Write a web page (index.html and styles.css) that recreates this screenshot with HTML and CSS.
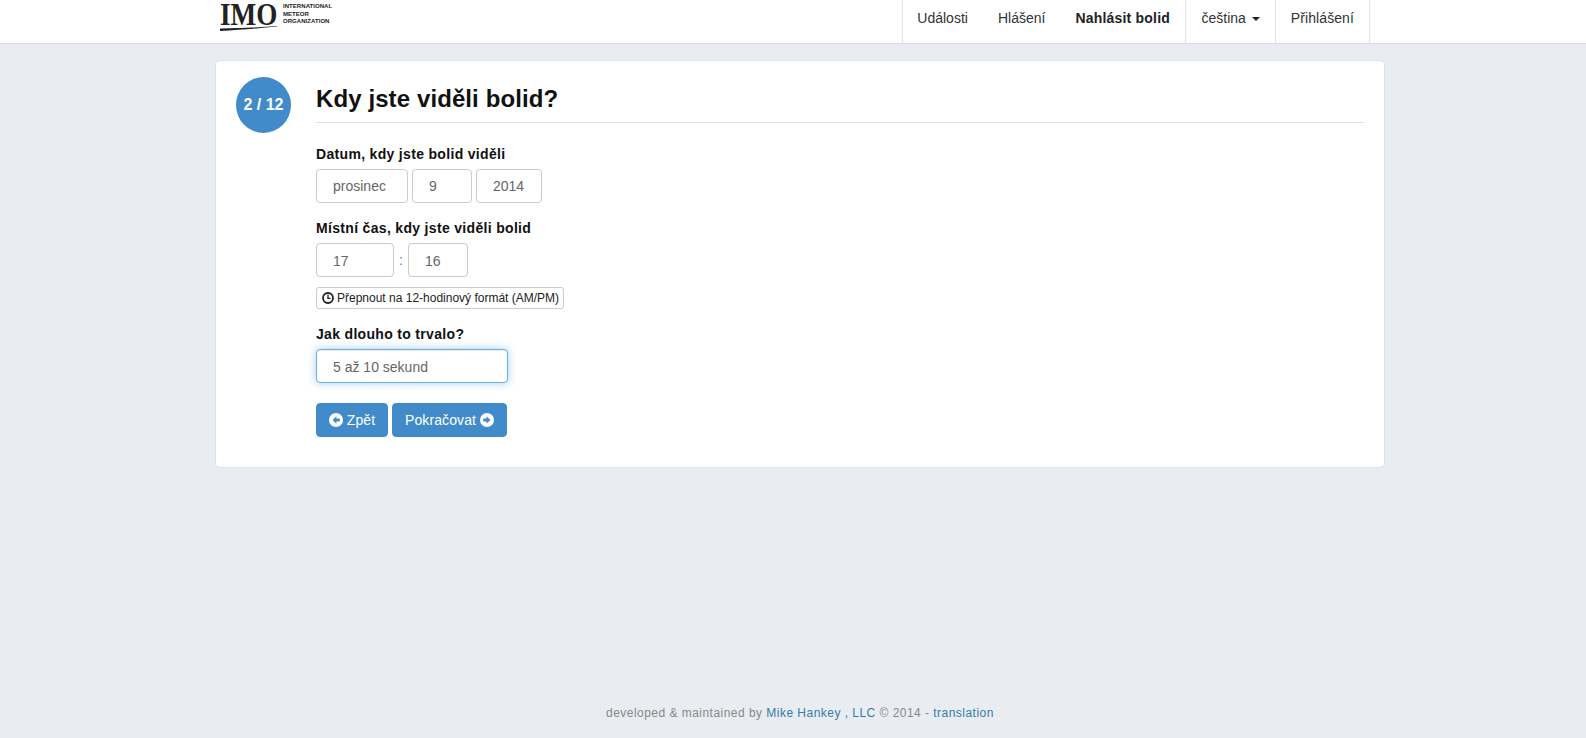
FILE: index.html
```html
<!DOCTYPE html>
<html lang="cs">
<head>
<meta charset="utf-8">
<title>Nahlásit bolid</title>
<link rel="stylesheet" href="styles.css">
</head>
<body>
<header class="navbar">
  <div class="navbar-inner">
    <a class="brand" href="#">
      <span class="brand-mark">IMO</span>
      <span class="brand-sub"><span>INTERNATIONAL</span><span>METEOR</span><span>ORGANIZATION</span></span>
      <svg class="brand-swoosh" viewBox="0 0 57 5" aria-hidden="true"><path d="M0 2.6 C20 2.4 40 1.2 57 0 L57 .6 C40 2.4 20 4 0 5Z" fill="#222"/></svg>
    </a>
    <nav class="nav">
      <a class="nav-item nav-first" href="#">Události</a>
      <a class="nav-item" href="#">Hlášení</a>
      <a class="nav-item nav-bold" href="#">Nahlásit bolid</a>
      <a class="nav-item nav-sep" href="#">čeština <span class="caret"></span></a>
      <a class="nav-item nav-sep nav-last" href="#">Přihlášení</a>
    </nav>
  </div>
</header>
<main class="card">
  <div class="step">2 / 12</div>
  <div class="content">
    <h1 class="title">Kdy jste viděli bolid?</h1>
    <div class="group g-date">
      <div class="label">Datum, kdy jste bolid viděli</div>
      <div class="row">
        <div class="field w-month">prosinec</div>
        <div class="field w-day">9</div>
        <div class="field w-year">2014</div>
      </div>
    </div>
    <div class="group g-time">
      <div class="label">Místní čas, kdy jste viděli bolid</div>
      <div class="row">
        <div class="field w-hour">17</div>
        <span class="colon">:</span>
        <div class="field w-min">16</div>
      </div>
      <button class="toggle" type="button">
        <svg class="ico-clock" viewBox="0 0 12 12" aria-hidden="true"><circle cx="6" cy="6" r="5" fill="none" stroke="#222" stroke-width="1.8"/><path d="M6 2.8v3.5h2.6" fill="none" stroke="#222" stroke-width="1.3"/></svg>
        Přepnout na 12-hodinový formát (AM/PM)
      </button>
    </div>
    <div class="group g-dur">
      <div class="label">Jak dlouho to trvalo?</div>
      <div class="field focus">5 až 10 sekund</div>
    </div>
    <div class="actions">
      <button class="btn btn-back" type="button">
        <svg class="ico" viewBox="0 0 14 14" aria-hidden="true"><circle cx="7" cy="7" r="7" fill="#fff"/><path d="M7.4 3.2 3.6 7l3.8 3.8V8.6h3.4V5.4H7.4Z" fill="#428bca"/></svg>
        Zpět
      </button>
      <button class="btn btn-next" type="button">
        Pokračovat
        <svg class="ico" viewBox="0 0 14 14" aria-hidden="true"><circle cx="7" cy="7" r="7" fill="#fff"/><path d="M6.6 3.2 10.4 7l-3.8 3.8V8.6H3.2V5.4h3.4Z" fill="#428bca"/></svg>
      </button>
    </div>
  </div>
</main>
<footer class="footer">developed &amp; maintained by <a href="#">Mike Hankey</a> <a href="#">, LLC</a> © 2014 - <a href="#">translation</a></footer>
</body>
</html>
```
FILE: styles.css
```css
* { box-sizing: border-box; }
html, body { height: 738px; }
body {
  margin: 0;
  background: #e9edf2;
  color: #111;
  font-family: "Liberation Sans", Arial, sans-serif;
  font-size: 14px;
  line-height: 20px;
  overflow: hidden;
  display: flex;
  flex-direction: column;
}
a { color: inherit; text-decoration: none; }

.navbar {
  height: 44px;
  background: #fff;
  border-bottom: 1px solid #d9dce1;
  flex: none;
}
.navbar-inner {
  width: 1155px;
  height: 43px;
  margin-left: 215px;
  display: flex;
  justify-content: space-between;
}
.brand { position: relative; display: block; width: 120px; height: 43px; margin-left: 5px; color: #222; }
.brand-mark {
  position: absolute; left: 0; top: 0;
  font-family: "Liberation Serif", serif;
  font-weight: bold;
  font-size: 32px;
  line-height: 28px;
  transform: scaleX(.85);
  transform-origin: left center;
}
.brand-sub {
  position: absolute; left: 63px; top: 3px;
  display: flex; flex-direction: column;
  font-size: 6px; line-height: 7.5px; font-weight: bold;
  letter-spacing: .05px;
  white-space: nowrap;
}
.brand-swoosh { position: absolute; left: 0; top: 26px; width: 57px; height: 5px; }
.nav { display: flex; height: 43px; }
.nav-item {
  padding: 8px 15px 0;
  line-height: 20px;
  white-space: nowrap;
  color: #333;
}
.nav-first { border-left: 1px solid #e1e3e6; padding-left: 14px; }
.nav-bold { font-weight: bold; letter-spacing: .2px; padding-right: 15.5px; color: #222; }
.nav-sep { border-left: 1px solid #e1e3e6; }
.nav-last { border-right: 1px solid #e1e3e6; letter-spacing: .1px; }
.caret {
  display: inline-block;
  width: 0; height: 0;
  margin-left: 2px;
  vertical-align: middle;
  border-top: 4px solid #222;
  border-left: 4px solid transparent;
  border-right: 4px solid transparent;
}

.card {
  width: 1170px;
  height: 408px;
  margin: 16px 0 0 215px;
  padding: 16px 20px 0;
  background: #fff;
  border: 1px solid #dfe2e6;
  border-radius: 5px;
  display: flex;
  flex: none;
}
.step {
  width: 55px; height: 56px;
  border-radius: 50%;
  background: #428bca;
  color: #fff;
  font-weight: bold;
  font-size: 16px;
  display: flex; align-items: center; justify-content: center;
  flex: none;
}
.content { flex: 1; margin-left: 25px; min-width: 0; }
.title {
  margin: 0;
  height: 46px;
  padding-top: 6px;
  font-size: 24px;
  line-height: 32px;
  font-weight: bold;
  letter-spacing: .1px;
  border-bottom: 1px solid #dfe2e6;
}
.group { display: block; }
.g-date { margin-top: 21px; }
.g-time { margin-top: 15px; }
.g-dur { margin-top: 15px; }
.label { font-weight: bold; line-height: 20px; margin-bottom: 5px; letter-spacing: .32px; }
.row { display: flex; align-items: center; gap: 4px; }
.field {
  height: 34px;
  padding: 6px 16px;
  border: 1px solid #ccc;
  border-radius: 4px;
  color: #666;
  background: #fff;
  line-height: 20px;
}
.w-month { width: 92px; }
.w-day { width: 60px; }
.w-year { width: 66px; }
.w-hour { width: 78px; padding-top: 7px; }
.w-min { width: 60px; padding-top: 7px; }
.colon { color: #428bca; width: 6px; text-align: center; }
.focus {
  width: 192px;
  padding-top: 7px;
  border-color: #66afe9;
  box-shadow: inset 0 1px 1px rgba(0,0,0,.075), 0 0 8px rgba(102,175,233,.6);
}
.toggle {
  display: flex;
  align-items: center;
  gap: 3px;
  margin-top: 10px;
  height: 22px;
  width: 248px;
  padding: 0 5px;
  font-family: inherit;
  font-size: 12px;
  line-height: 18px;
  color: #222;
  background: #fff;
  border: 1px solid #ccc;
  border-radius: 3px;
  white-space: nowrap;
}
.ico-clock { width: 12px; height: 12px; flex: none; }
.actions { display: flex; gap: 4px; margin-top: 20px; }
.btn {
  display: flex;
  align-items: center;
  justify-content: center;
  height: 34px;
  padding: 0;
  font-family: inherit;
  font-size: 14px;
  letter-spacing: .1px;
  color: #fff;
  background: #428bca;
  border: 1px solid #428bca;
  border-radius: 4px;
}
.btn-back { width: 72px; gap: 4px; }
.btn-next { width: 115px; gap: 4px; }
.ico { width: 14px; height: 14px; flex: none; }

.footer {
  margin-top: 237px;
  margin-left: 606px;
  font-size: 12px;
  line-height: 17px;
  color: #888;
  letter-spacing: .47px;
  white-space: nowrap;
}
.footer a { color: #337ca8; }
```
